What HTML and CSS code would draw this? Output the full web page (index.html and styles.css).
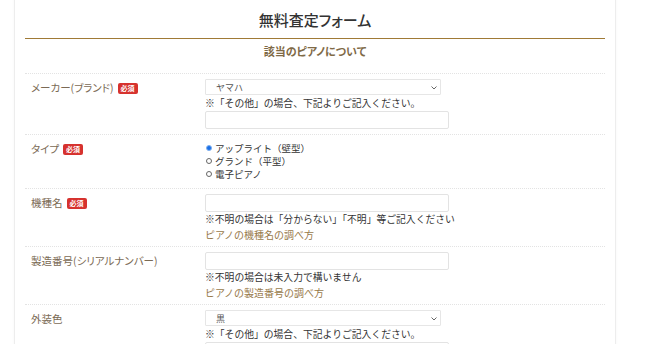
FILE: index.html
```html
<!DOCTYPE html>
<html lang="ja">
<head>
    <meta charset="UTF-8">
    <meta name="viewport" content="width=device-width, initial-scale=1.0">
    <title>無料査定フォーム</title>
    <link rel="stylesheet" href="styles.css">
</head>
<body>

<div class="card">
    <h2 class="form-title">無料査定フォーム</h2>
    <h3 class="section-title">該当のピアノについて</h3>

    <form class="form">
        <div class="row">
            <div class="label">メーカー(ブランド) <span class="req">必須</span></div>
            <div class="field">
                <div class="select-wrap">
                    <select class="select">
                        <option>ヤマハ</option>
                        <option>カワイ</option>
                        <option>その他</option>
                    </select>
                    <svg class="chev" width="6" height="4" viewBox="0 0 6 4"><path d="M0.5 0.5 L3 3 L5.5 0.5" fill="none" stroke="#666" stroke-width="1"/></svg>
                </div>
                <p class="note">※「その他」の場合、下記よりご記入ください。</p>
                <input type="text" class="text">
            </div>
        </div>

        <div class="row">
            <div class="label">タイプ <span class="req">必須</span></div>
            <div class="field radios">
                <label class="radio"><input type="radio" name="type" checked>アップライト（壁型）</label>
                <label class="radio"><input type="radio" name="type">グランド（平型）</label>
                <label class="radio"><input type="radio" name="type">電子ピアノ</label>
            </div>
        </div>

        <div class="row row-tight">
            <div class="label">機種名 <span class="req">必須</span></div>
            <div class="field">
                <input type="text" class="text">
                <p class="note">※不明の場合は「分からない」「不明」等ご記入ください</p>
                <a href="#" class="help">ピアノの機種名の調べ方</a>
            </div>
        </div>

        <div class="row row-tight">
            <div class="label">製造番号(シリアルナンバー)</div>
            <div class="field">
                <input type="text" class="text">
                <p class="note">※不明の場合は未入力で構いません</p>
                <a href="#" class="help">ピアノの製造番号の調べ方</a>
            </div>
        </div>

        <div class="row">
            <div class="label">外装色</div>
            <div class="field">
                <div class="select-wrap">
                    <select class="select">
                        <option>黒</option>
                        <option>白</option>
                        <option>木目</option>
                        <option>その他</option>
                    </select>
                    <svg class="chev" width="6" height="4" viewBox="0 0 6 4"><path d="M0.5 0.5 L3 3 L5.5 0.5" fill="none" stroke="#666" stroke-width="1"/></svg>
                </div>
                <p class="note">※「その他」の場合、下記よりご記入ください。</p>
                <input type="text" class="text">
            </div>
        </div>
    </form>
</div>

</body>
</html>
```

FILE: styles.css
```css
body {
    font-family: "Noto Sans CJK JP", "Noto Sans", sans-serif;
    margin: 0;
    padding: 0;
    background-color: #fff;
    color: #333;
}

.card {
    width: 580px;
    margin: -10px 0 0 14px;
    padding: 14px 10px 40px;
    background-color: #fff;
    border-left: 1px solid #ededed;
    border-right: 1px solid #ededed;
    box-shadow: 0 0 3px rgba(0, 0, 0, 0.04);
}

.form-title {
    margin: 0;
    padding: 6px 0 8px;
    font-size: 15px;
    font-weight: 500;
    line-height: 20px;
    text-align: center;
    color: #333;
    font-feature-settings: "palt";
    border-bottom: 1px solid #a07a36;
}

.section-title {
    margin: 0;
    padding: 5px 0 14px;
    font-size: 11px;
    font-weight: 700;
    line-height: 15px;
    text-align: center;
    color: #7f6a47;
    font-feature-settings: "palt";
}

.form {
    margin: 0;
}

.row {
    display: grid;
    grid-template-columns: 180px 1fr;
    border-top: 1px dotted #e3e3e3;
    padding: 5px 0 5px;
}

.row-tight {
    padding-bottom: 4px;
}

.label {
    padding: 1px 0 0 6px;
    font-size: 10.5px;
    line-height: 16px;
    color: #7b6a55;
    font-feature-settings: "palt";
    display: flex;
    align-items: flex-start;
    gap: 4px;
}

.req {
    display: inline-block;
    margin-top: 3px;
    padding: 0 3px;
    height: 11px;
    line-height: 11px;
    font-size: 7px;
    font-weight: 700;
    color: #fff;
    background-color: #d6322e;
    border-radius: 2px;
}

.field {
    display: flex;
    flex-direction: column;
    align-items: flex-start;
}

.select-wrap {
    position: relative;
    width: 236px;
    margin-bottom: 1px;
}

.select {
    -webkit-appearance: none;
    appearance: none;
    display: block;
    width: 100%;
    height: 16px;
    padding: 0 0 0 10px;
    border: 1px solid #e6e6e6;
    border-radius: 1px;
    background-color: #fff;
    font-family: inherit;
    font-size: 9px;
    color: #555;
    box-sizing: border-box;
}

.chev {
    position: absolute;
    right: 4px;
    top: 7px;
}

.note {
    margin: 0;
    font-size: 9.8px;
    line-height: 15px;
    color: #333;
}

.text {
    display: block;
    width: 244px;
    height: 18px;
    margin: 0;
    padding: 0 6px;
    border: 1px solid #e3e3e3;
    border-radius: 2px;
    box-sizing: border-box;
    font-family: inherit;
    font-size: 10px;
}

.help {
    font-size: 10px;
    line-height: 15px;
    color: #97794a;
    text-decoration: none;
}

.radios {
    padding-top: 1px;
    padding-bottom: 3px;
}

.radio {
    display: flex;
    align-items: center;
    height: 13px;
    line-height: 12px;
    font-size: 9.5px;
    color: #333;
}

.radio input {
    -webkit-appearance: none;
    appearance: none;
    width: 6px;
    height: 6px;
    margin: 0 3px 0 1px;
    border: 1px solid #666;
    border-radius: 50%;
    box-sizing: border-box;
    background-color: #fff;
}

.radio input:checked {
    border-color: #7fb0f0;
    background-color: #1a6fe6;
}
```
